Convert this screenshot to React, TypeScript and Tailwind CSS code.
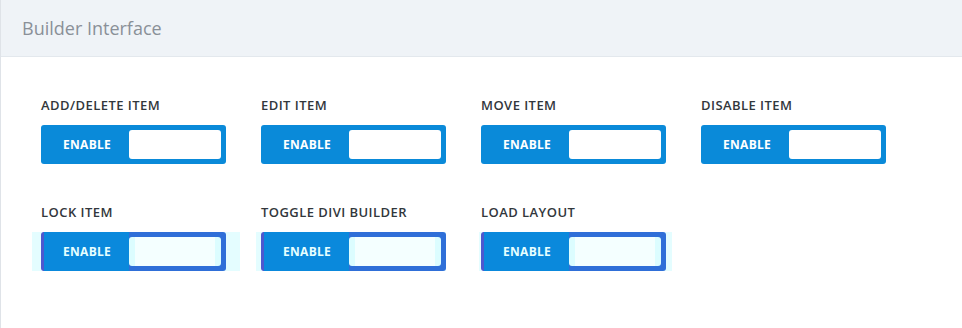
import React from 'react';

type Item = { label: string; glow?: { left: number; right: number } };

const rowOne: Item[] = [
  { label: 'ADD/DELETE ITEM' },
  { label: 'EDIT ITEM' },
  { label: 'MOVE ITEM' },
  { label: 'DISABLE ITEM' },
];

const rowTwo: Item[] = [
  { label: 'LOCK ITEM', glow: { left: 9, right: 14 } },
  { label: 'TOGGLE DIVI BUILDER', glow: { left: 5, right: 0 } },
  { label: 'LOAD LAYOUT', glow: { left: 2, right: 6 } },
];

const Toggle: React.FC<{ item: Item }> = ({ item }) => {
  const active = !!item.glow;
  return (
    <div className="relative h-[39px] w-[185px]">
      {item.glow && (
        <span
          className="absolute top-0 bottom-0 bg-[#e4fdff]"
          style={{ left: -item.glow.left, right: -item.glow.right }}
        />
      )}
      <div
        className={
          'relative flex h-full w-full overflow-hidden rounded-[3px] ' +
          (active ? 'bg-[#2f6fd8] border-l-[3px] border-[#4d58cf]' : 'bg-[#0a8ad9]')
        }
      >
        <div
          className={
            'flex h-full items-center ' +
            (active ? 'w-[85px] bg-[#0a89dc] pl-[19px]' : 'w-[88px] pl-[22px]')
          }
        >
          <span
            className={
              'text-[12px] font-bold tracking-[0.3px] ' + (active ? 'text-[#e6ffff]' : 'text-white')
            }
          >
            ENABLE
          </span>
        </div>
        <div className="flex flex-1 py-[5px] pr-[5px]">
          <div
            className={
              'flex-1 rounded-[3px] ' + (active ? 'bg-[#f4ffff] border-x-[6px] border-[#dcfdff]' : 'bg-white')
            }
          />
        </div>
      </div>
    </div>
  );
};

const Field: React.FC<{ item: Item }> = ({ item }) => (
  <div className="w-[220px]">
    <p className="mb-[11px] h-[17px] text-[13px] font-semibold leading-[17px] tracking-[0.45px] text-[#32373c]">
      {item.label}
    </p>
    <Toggle item={item} />
  </div>
);

export default function App() {
  return (
    <div
      className="h-[328px] w-[962px] overflow-hidden border-l border-[#dfe3e8] bg-white"
      style={{ fontFamily: '"Open Sans", "Noto Sans", sans-serif' }}
    >
      <div className="flex h-[57px] items-center border-b border-[#e3e8ed] bg-[#eff3f7] pl-[21px]">
        <h2 className="text-[18px] text-[#8a9098]">Builder Interface</h2>
      </div>
      <div className="pl-[40px] pt-[40px]">
        <div className="flex">
          {rowOne.map((item, i) => (
            <Field key={i} item={item} />
          ))}
        </div>
        <div className="mt-[40px] flex">
          {rowTwo.map((item, i) => (
            <Field key={i} item={item} />
          ))}
        </div>
      </div>
    </div>
  );
}
